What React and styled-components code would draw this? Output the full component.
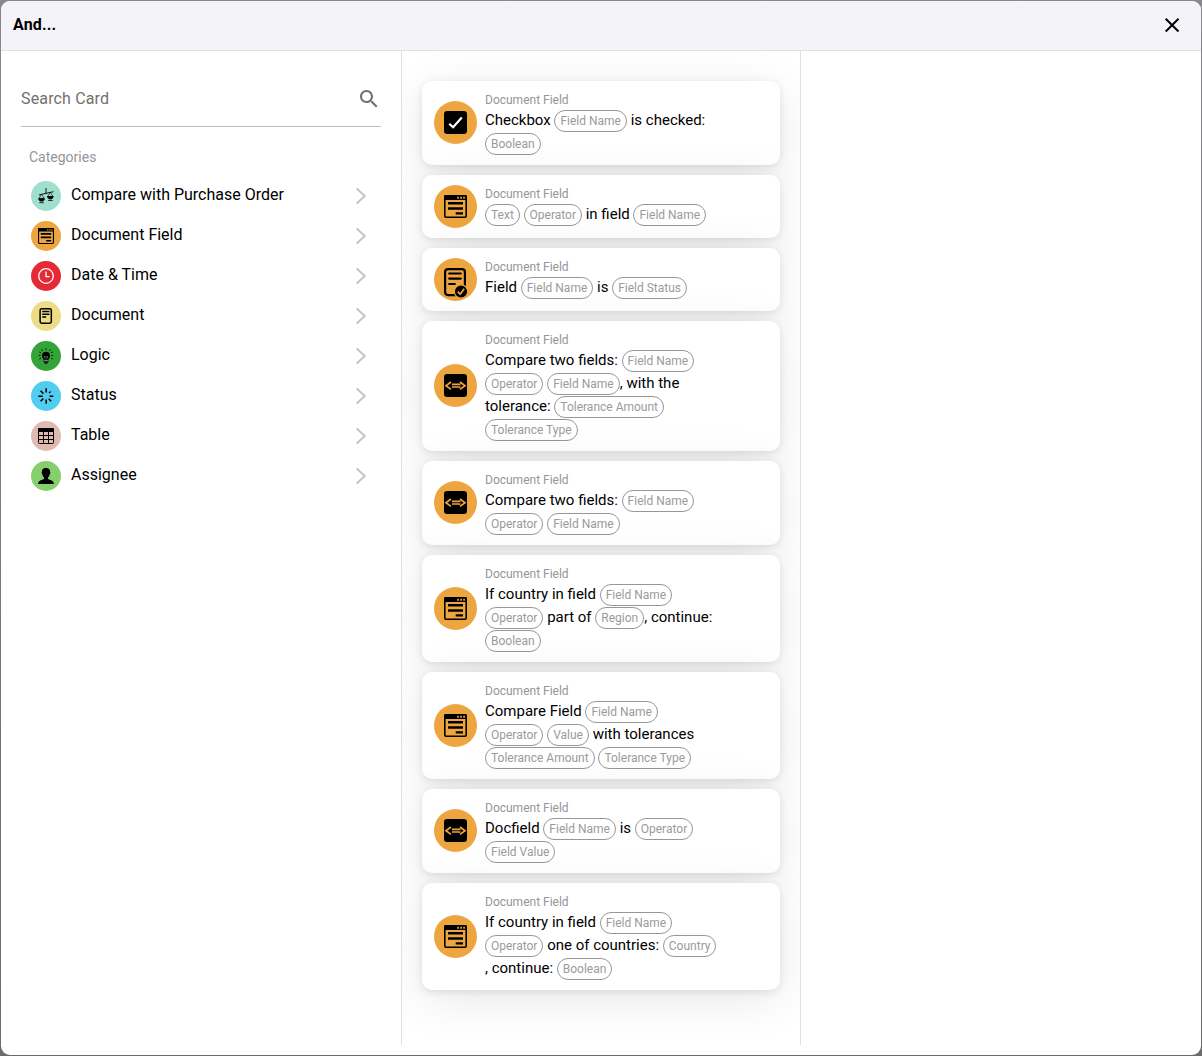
import React from "react";
import styled, { createGlobalStyle } from "styled-components";

const GlobalStyle = createGlobalStyle`
  *, *::before, *::after { box-sizing: border-box; }
  html, body, #root { height: 100%; }
  body {
    margin: 0;
    background: linear-gradient(#8a888e, #6c6c6c);
    font-family: Roboto, "Liberation Sans", sans-serif;
    color: #000;
    overflow: hidden;
  }
`;

const Backdrop = styled.div`
  height: 1056px;
  padding: 1px;
`;

const Modal = styled.div`
  height: 100%;
  display: flex;
  flex-direction: column;
  background: #fff;
  border-radius: 9px;
  overflow: hidden;
`;

const Header = styled.header`
  flex: none;
  height: 50px;
  display: flex;
  align-items: center;
  justify-content: space-between;
  padding: 0 20px 2px 12px;
  background: #f4f3fa;
  border-bottom: 1px solid #e2e2e5;
`;

const Title = styled.h1`
  margin: 0;
  font-size: 16px;
  line-height: 20px;
  font-weight: 700;
  letter-spacing: 0.15px;
`;

const CloseButton = styled.button`
  display: flex;
  border: 0;
  padding: 0;
  background: none;
`;

const Columns = styled.main`
  flex: 1;
  display: grid;
  grid-template-columns: 400px 400px 1fr;
  min-height: 0;
  padding-bottom: 10px;
`;

const Sidebar = styled.aside`
  padding: 20px 20px 0;
`;

const SearchField = styled.label`
  display: flex;
  align-items: center;
  height: 56px;
  border-bottom: 1px solid #bdbdbd;
`;

const SearchInput = styled.input`
  flex: 1;
  min-width: 0;
  border: 0;
  padding: 0;
  outline: 0;
  background: none;
  font: 400 16px/20px Roboto, sans-serif;
  letter-spacing: 0.15px;
  color: #000;
  &::placeholder { color: #707070; opacity: 1; }
`;

const SectionLabel = styled.h2`
  margin: 20px 0 8px 8px;
  font-size: 14px;
  line-height: 21px;
  font-weight: 400;
  color: #95959a;
`;

const CategoryList = styled.ul`
  list-style: none;
  margin: 0;
  padding: 0;
`;

const CategoryRow = styled.li`
  display: flex;
  align-items: center;
  height: 40px;
  padding: 0 14px 0 10px;
`;

const CategoryName = styled.span`
  flex: 1;
  padding: 0 0 3px 10px;
  font-size: 16px;
  line-height: 20px;
`;

const IconCircle = styled.span`
  flex: none;
  display: flex;
  align-items: center;
  justify-content: center;
  width: ${(p) => p.$size}px;
  height: ${(p) => p.$size}px;
  border-radius: 50%;
  background: ${(p) => p.$color};
`;

const CardColumn = styled.section`
  display: flex;
  flex-direction: column;
  gap: 10px;
  padding: 30px 20px 0;
  border: solid #e0e0e2;
  border-width: 0 1px;
  overflow: hidden;
`;

const Card = styled.article`
  flex: none;
  display: flex;
  align-items: center;
  gap: 8px;
  padding: 10px 12px;
  background: #fff;
  border-radius: 10px;
  box-shadow: 0 2px 8px rgba(0, 0, 0, 0.1), 0 10px 50px rgba(0, 0, 0, 0.09);

  & > ${IconCircle} { margin: -0.3px 0 0.3px; }
`;

const CardBody = styled.div`
  align-self: flex-start;
  width: 233px;
`;

const CardGroup = styled.div`
  font-size: 12px;
  line-height: 18px;
  color: #95959a;
`;

const CardText = styled.p`
  margin: 0;
  font-size: 15px;
  line-height: 23px;
`;

const Chip = styled.span`
  display: inline-block;
  height: 22px;
  margin: -1px 0;
  padding: 0 5px;
  border: 1px solid #979797;
  border-radius: 11px;
  font-size: 12px;
  line-height: 20px;
  color: #9b9b9b;
  vertical-align: middle;
  white-space: nowrap;
`;

const ScalesIcon = ({ size }) => (
  <svg width={size} height={size} viewBox="0 0 16 16" fill="none" stroke="#000">
    <path d="M8 0v5.500M1 6.900 15.500 3.700" strokeWidth=".9" />
    <path d="M3.500 6.300 1 10.400h5.200zM12.300 4.400 9.700 8.400h5.300z" strokeWidth=".6" />
    <path d="M.2 10.200h6.700c-.2 2.100-1.500 3.400-3.300 3.400S.4 12.300.2 10.200zM9 8h6.700c-.2 2.100-1.500 3.400-3.300 3.400S9.200 10.100 9 8z" fill="#000" stroke="none" />
    <path d="M1.300 14.700h4.600M10.200 12.500h4.400" strokeWidth=".8" />
  </svg>
);

const FormIcon = ({ size }) => (
  <svg width={size} height={size} viewBox="0 0 23 23">
    <rect x=".8" y=".8" width="21.400" height="21.400" rx="1.200" fill="none" stroke="#000" strokeWidth="1.600" />
    <path d="M0 5V1.500Q0 0 1.500 0h20Q23 0 23 1.500V5z" />
    <path d="M13.200 1.800h1.700v1.900h-1.700zM16.200 1.800h1.700v1.900h-1.700zM19.200 1.800h1.700v1.900h-1.700z" fill="#eca53f" />
    <path d="M4 7.100h15v2.500H4zM4 12.300h15v2.500H4zM11.700 17.200H19v2.200h-7.300z" />
  </svg>
);

const ClockIcon = ({ size }) => (
  <svg width={size} height={size} viewBox="0 0 16 16" fill="none" stroke="#fff" strokeWidth="1.300">
    <circle cx="8" cy="8" r="7.300" />
    <path d="M8 3.500V8.600h3.600" />
  </svg>
);

const DocumentIcon = ({ size }) => (
  <svg width={size} height={size} viewBox="0 0 16 16" fill="none" stroke="#000" strokeWidth="1.500">
    <rect x="2.100" y=".8" width="11.200" height="14.400" rx="1.700" />
    <path d="M4.200 3.500h7.200M4.200 6.300h7.200M4.200 9.100h4" strokeWidth="1.500" />
  </svg>
);

const BulbIcon = ({ size }) => (
  <svg width={size} height={size} viewBox="0 0 16 16" fill="none" stroke="#000" strokeWidth=".9">
    <path d="M8 .3v1.700M3.700 1.500l1 1.500M12.300 1.500l-1 1.500M1.300 4l1.700 1M14.700 4 13 5M.8 7.500h1.700M13.500 7.500h1.700M1.400 11l1.600-.9M14.600 11l-1.600-.9" />
    <path d="M8 3.800a4 4 0 0 0-4 4c0 1.900 1.200 2.500 1.600 4.100h4.800c.4-1.600 1.600-2.200 1.600-4.100a4 4 0 0 0-4-4z" fill="#000" stroke="none" />
    <path d="M7.200 11.500 6.400 8.400l1.600.7 1.600-.7-.8 3.100" stroke="#6f9f72" strokeWidth=".6" />
    <path d="M5.500 12h5v2L9 15.900H7L5.500 14z" fill="#222" stroke="none" />
    <path d="M6 12.500h4" stroke="#78b77c" strokeWidth=".7" />
  </svg>
);

const SpinnerIcon = ({ size }) => (
  <svg width={size} height={size} viewBox="0 0 16 16" fill="none" stroke="#000" strokeWidth="1.500">
    <path d="M8.200.2v4.300M8.200 11.500v4.200M.3 8.200h4.400M2.500 2.700l2.900 2.900M2.600 13.300l2.800-2.800M10.700 10.700l2.500 2.500M11.600 8.200h3.700" />
    <path d="m11 5.200 1.700-1.700" strokeWidth="1.100" />
  </svg>
);

const TableIcon = ({ size }) => (
  <svg width={size} height={size} viewBox="0 0 16 16" fill="none" stroke="#000">
    <rect x=".5" y=".5" width="15" height="15" rx=".8" />
    <path d="M0 4V1.200Q0 0 1.200 0h13.600Q16 0 16 1.200V4z" fill="#000" stroke="none" />
    <path d="M0 7.500h16M0 11.500h16M5.500 4v12M10.500 4v12" />
  </svg>
);

const PersonIcon = ({ size }) => (
  <svg width={size} height={size} viewBox="0 0 16 16">
    <path d="M8 0C5.300-.1 3.700 1.500 3.900 4c-.5.3-.2 2 .4 2.300.3 1.600.9 2.500 1.700 3.200v1.200C5.200 12.200.3 11.500.1 16h15.800c-.2-4.500-5.100-3.800-5.900-5.300V9.500c.8-.7 1.400-1.600 1.700-3.200.6-.3.9-2 .4-2.300C12.300 1.700 10.800.1 8 0z" />
  </svg>
);

const CheckIcon = ({ size }) => (
  <svg width={size} height={size} viewBox="0 0 23 23">
    <rect width="23" height="23" rx="3.200" />
    <path d="m5.200 12.700 3.900 3.600L17.800 6.500" fill="none" stroke="#fff" strokeWidth="2.200" />
  </svg>
);

const CompareIcon = ({ size }) => (
  <svg width={size} height={size} viewBox="0 0 23 23">
    <rect width="23" height="23" rx="3.200" />
    <path d="M7 8 2 11.700l5 3.700M16 8l5 3.700-5 3.700M8 10.400h8.500M8 13h8.500" fill="none" stroke="#eca53f" strokeWidth="1.700" />
  </svg>
);

const StatusIcon = ({ size }) => (
  <svg width={size} height={size} viewBox="0 0 23 23" overflow="visible">
    <rect x="1.100" y="1.100" width="19.800" height="26" rx="3" fill="none" stroke="#000" strokeWidth="2.200" />
    <path d="M5.200 5.500h11.600M5.200 10.600h11.600M5.200 16h5.600" fill="none" stroke="#000" strokeWidth="2.200" strokeLinecap="round" />
    <circle cx="17" cy="23.500" r="6.700" stroke="#eca53f" strokeWidth="1.300" />
    <path d="m13.700 23.700 2.500 2.500 4-5.500" fill="none" stroke="#eca53f" strokeWidth="1.700" />
  </svg>
);

const SearchIcon = () => (
  <svg width="24" height="24" viewBox="0 0 24 24" fill="#707070">
    <path d="M15.500 14h-.79l-.28-.27C15.410 12.590 16 11.110 16 9.500 16 5.910 13.090 3 9.500 3S3 5.910 3 9.500 5.910 16 9.500 16c1.610 0 3.090-.59 4.230-1.570l.27.28v.79l5 4.990L20.490 19l-4.990-5zm-6 0C7.010 14 5 11.990 5 9.500S7.010 5 9.500 5 14 7.010 14 9.500 11.990 14 9.500 14z" />
  </svg>
);

const ChevronIcon = () => (
  <svg width="12" height="18" viewBox="0 0 12 18" fill="none" stroke="#c4c3ca" strokeWidth="2">
    <path d="m1.700 1.500 8 7.500-8 7.500" />
  </svg>
);

const CloseIcon = () => (
  <svg width="18" height="18" viewBox="0 0 18 18" fill="none" stroke="#000" strokeWidth="2">
    <path d="m2.700 2.700 12.800 12.800M15.500 2.700 2.700 15.500" />
  </svg>
);

const categories = [
  { name: "Compare with Purchase Order", color: "#9edfcd", icon: ScalesIcon },
  { name: "Document Field", color: "#eca53f", icon: FormIcon },
  { name: "Date & Time", color: "#e32a35", icon: ClockIcon },
  { name: "Document", color: "#ebdc85", icon: DocumentIcon },
  { name: "Logic", color: "#34a43a", icon: BulbIcon },
  { name: "Status", color: "#50cdef", icon: SpinnerIcon },
  { name: "Table", color: "#dfbab2", icon: TableIcon },
  { name: "Assignee", color: "#86cf6d", icon: PersonIcon },
];

/* Words in square brackets are rendered as parameter chips. */
const cards = [
  { icon: CheckIcon, text: "Checkbox [Field Name] is checked: [Boolean]" },
  { icon: FormIcon, text: "[Text] [Operator] in field [Field Name]" },
  { icon: StatusIcon, text: "Field [Field Name] is [Field Status]" },
  {
    icon: CompareIcon,
    text: "Compare two fields: [Field Name] [Operator] [Field Name], with the tolerance: [Tolerance Amount] [Tolerance Type]",
  },
  { icon: CompareIcon, text: "Compare two fields: [Field Name] [Operator] [Field Name]" },
  { icon: FormIcon, text: "If country in field [Field Name] [Operator] part of [Region], continue: [Boolean]" },
  {
    icon: FormIcon,
    text: "Compare Field [Field Name] [Operator] [Value] with tolerances [Tolerance Amount] [Tolerance Type]",
  },
  { icon: CompareIcon, text: "Docfield [Field Name] is [Operator] [Field Value]" },
  {
    icon: FormIcon,
    text: "If country in field [Field Name] [Operator] one of countries: [Country], continue: [Boolean]",
  },
];

const renderText = (text) =>
  text
    .split(/(\[[^\]]+\])/)
    .filter(Boolean)
    .map((part, i) => (part[0] === "[" ? <Chip key={i}>{part.slice(1, -1)}</Chip> : part));

export default function App() {
  return (
    <>
      <GlobalStyle />
      <Backdrop>
        <Modal>
          <Header>
            <Title>And...</Title>
            <CloseButton aria-label="Close">
              <CloseIcon />
            </CloseButton>
          </Header>
          <Columns>
            <Sidebar>
              <SearchField>
                <SearchInput placeholder="Search Card" />
                <SearchIcon />
              </SearchField>
              <SectionLabel>Categories</SectionLabel>
              <CategoryList>
                {categories.map(({ name, color, icon: Icon }) => (
                  <CategoryRow key={name}>
                    <IconCircle $size={30} $color={color}>
                      <Icon size={16} />
                    </IconCircle>
                    <CategoryName>{name}</CategoryName>
                    <ChevronIcon />
                  </CategoryRow>
                ))}
              </CategoryList>
            </Sidebar>
            <CardColumn>
              {cards.map(({ icon: Icon, text }) => (
                <Card key={text}>
                  <IconCircle $size={43} $color="#eca53f">
                    <Icon size={23} />
                  </IconCircle>
                  <CardBody>
                    <CardGroup>Document Field</CardGroup>
                    <CardText>{renderText(text)}</CardText>
                  </CardBody>
                </Card>
              ))}
            </CardColumn>
          </Columns>
        </Modal>
      </Backdrop>
    </>
  );
}
